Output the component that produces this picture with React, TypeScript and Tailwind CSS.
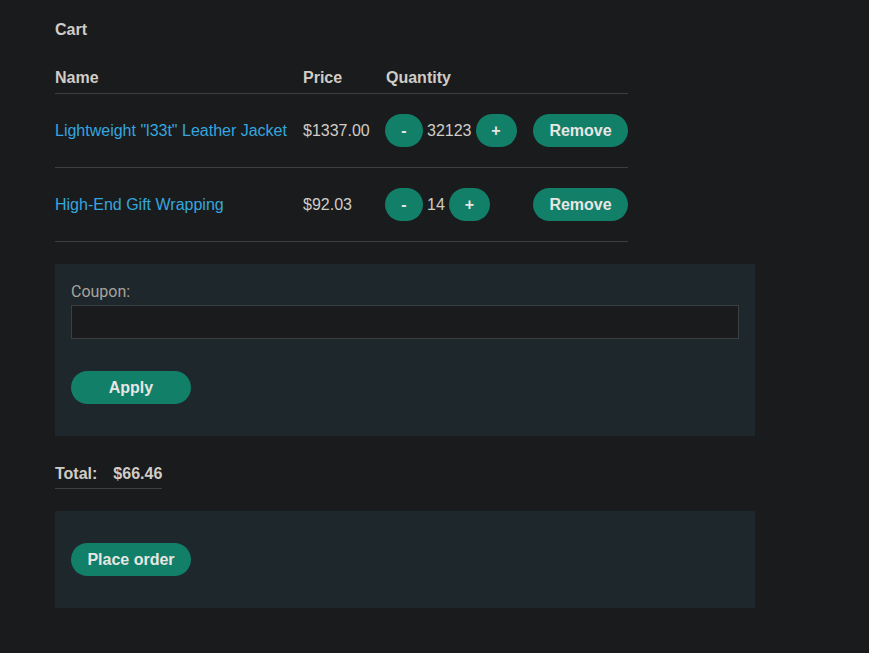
import { useState } from 'react';

type Item = {
    name: string;
    price: string;
    qty: number;
};

const initialItems: Item[] = [
    { name: 'Lightweight "l33t" Leather Jacket', price: '$1337.00', qty: 32123 },
    { name: 'High-End Gift Wrapping', price: '$92.03', qty: 14 },
];

const btn = 'h-[33px] rounded-full bg-[#127f69] text-[#e8e6e3] font-bold text-[16px] leading-none';

export default function App() {
    const [items, setItems] = useState<Item[]>(initialItems);
    const [coupon, setCoupon] = useState('');

    const changeQty = (idx: number, delta: number) => {
        setItems(items.map((it, i) => (i === idx ? { ...it, qty: Math.max(0, it.qty + delta) } : it)));
    };

    return (
        <div className="min-h-[653px] w-full bg-[#1a1b1d] text-[#d0ccc6] text-[16px] font-['Liberation_Sans',Arial,sans-serif]">
            <div className="pl-[55px] pt-[20px] pb-[45px]">
                <h2 className="font-bold leading-[20px]">Cart</h2>

                {/* table */}
                <div className="mt-[18px] w-[573px]">
                    <div className="grid grid-cols-[248px_83px_147px_95px] h-[36px] items-end pb-[6px] border-b border-[#3c3f42] font-bold leading-[18px]">
                        <div>Name</div>
                        <div>Price</div>
                        <div>Quantity</div>
                        <div></div>
                    </div>
                    {items.map((it, i) => (
                        <div
                            key={it.name}
                            className="grid grid-cols-[248px_82px_148px_95px] h-[74px] items-center border-b border-[#3c3f42]"
                        >
                            <a href="#" className="text-[#35a6df]">{it.name}</a>
                            <div>{it.price}</div>
                            <div className="flex items-center">
                                <button type="button" onClick={() => changeQty(i, -1)} className={`${btn} w-[38px]`}>-</button>
                                <span className="px-[4px]">{it.qty}</span>
                                <button type="button" onClick={() => changeQty(i, 1)} className={`${btn} w-[41px]`}>+</button>
                            </div>
                            <button
                                type="button"
                                onClick={() => setItems(items.filter((_, j) => j !== i))}
                                className={`${btn} w-[95px]`}
                            >
                                Remove
                            </button>
                        </div>
                    ))}
                </div>

                {/* coupon */}
                <div className="mt-[22px] w-[700px] h-[172px] bg-[#1d272c] px-[16px] pt-[19px]">
                    <label className="block text-[#a9a39b] leading-[18px] font-['Roboto',sans-serif]">Coupon:</label>
                    <input
                        value={coupon}
                        onChange={(e) => setCoupon(e.target.value)}
                        className="mt-[4px] block w-[668px] h-[34px] bg-[#1a1b1d] border border-[#3c3f42] outline-none px-2 text-[#d0ccc6]"
                    />
                    <button type="button" className={`${btn} mt-[32px] w-[120px]`}>Apply</button>
                </div>

                {/* total */}
                <div className="mt-[29px] inline-flex gap-[16px] font-bold border-b border-[#3c3f42] pb-[5px] leading-[18px]">
                    <span>Total:</span>
                    <span>$66.46</span>
                </div>

                {/* order */}
                <div className="mt-[22px] w-[700px] h-[97px] bg-[#1d272c] px-[16px] pt-[32px]">
                    <button type="button" className={`${btn} w-[120px]`}>Place order</button>
                </div>
            </div>
        </div>
    );
}
